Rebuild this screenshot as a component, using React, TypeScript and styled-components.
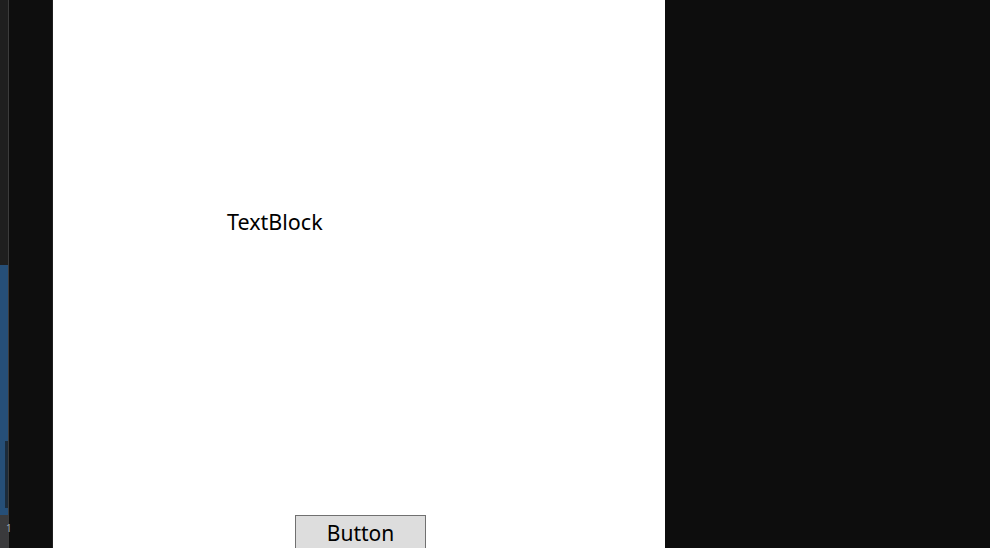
import React from 'react';
import styled, {createGlobalStyle} from 'styled-components';

const GlobalStyle = createGlobalStyle`
    html, body {
        margin: 0;
        padding: 0;
        background: #0d0d0d;
        overflow: hidden;
    }
    #root {
        height: 548px;
    }
`

const Screen = styled.div`
    display: flex;
    width: 990px;
    height: 548px;
    background: #0d0d0d;
    font-family: "Noto Sans", "Open Sans", sans-serif;
`

const SidePanel = styled.div`
    display: flex;
    flex-direction: column;
    width: 8px;
    border-right: 1px solid #3c3c3c;
`

const SideBlock = styled.div<{ $bg: string; $h?: number }>`
    position: relative;
    background: ${p => p.$bg};
    height: ${p => (p.$h ? `${p.$h}px` : 'auto')};
    flex: ${p => (p.$h ? '0 0 auto' : '1')};
`

const SideInset = styled.div`
    position: absolute;
    left: 5px;
    right: 0;
    top: 176px;
    height: 67px;
    background: #1c2b3a;
`

const SideDigit = styled.span`
    position: absolute;
    left: 6px;
    top: 7px;
    font-size: 10px;
    line-height: 12px;
    color: #9aa6b4;
`

const Gutter = styled.div`
    width: 43px;
    background: #0e0e0e;
    border-right: 1px solid #1f1f1f;
`

const Canvas = styled.div`
    display: flex;
    flex-direction: column;
    width: 612px;
    height: 548px;
    background: #ffffff;
    overflow: hidden;
`

const TextBlock = styled.div`
    margin: 207px 0 0 174px;
    font-size: 21.5px;
    line-height: 29px;
    color: #000;
`

const ButtonRow = styled.div`
    margin-top: auto;
    padding-left: 242px;
    height: 33px;
`

const DesignButton = styled.button`
    width: 131px;
    height: 36px;
    padding: 0;
    background: #dddddd;
    border: 1px solid #707070;
    border-radius: 0;
    font-family: "Noto Sans", "Open Sans", sans-serif;
    font-size: 21px;
    line-height: 30px;
    color: #000;
    text-align: center;
    vertical-align: top;
`

const App = () => {
    return (
        <>
            <GlobalStyle/>
            <Screen>
                <SidePanel>
                    <SideBlock $bg="#1f1f1f" $h={265}/>
                    <SideBlock $bg="#264f78">
                        <SideInset/>
                    </SideBlock>
                    <SideBlock $bg="#3a3a3c" $h={33}>
                        <SideDigit>1</SideDigit>
                    </SideBlock>
                </SidePanel>
                <Gutter/>
                <Canvas>
                    <TextBlock>TextBlock</TextBlock>
                    <ButtonRow>
                        <DesignButton>Button</DesignButton>
                    </ButtonRow>
                </Canvas>
            </Screen>
        </>
    );
};

export default App;
